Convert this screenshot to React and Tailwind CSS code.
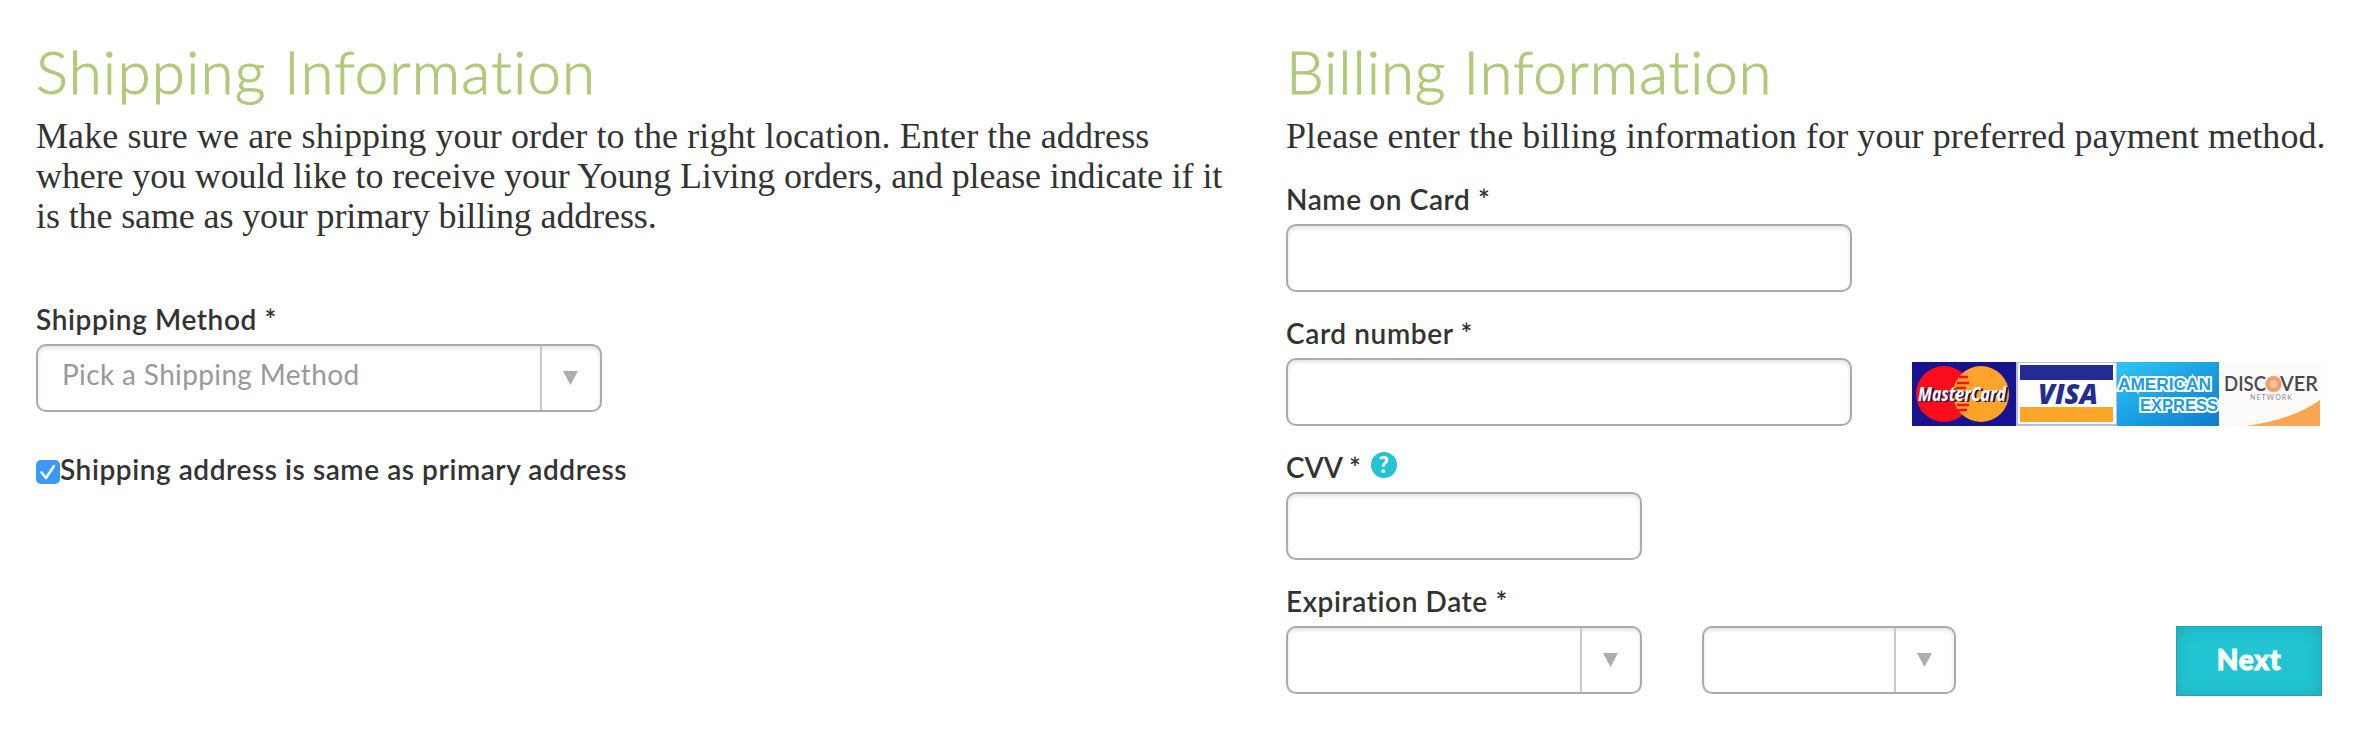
import React, { useState } from "react";
import clsx from "clsx";

const Heading = ({ children, className }) => (
  <h2
    className={clsx(
      "font-['Lato'] text-[60px] leading-[72px] font-light text-[#b1c978] whitespace-nowrap [-webkit-text-stroke:0.9px_#b1c978]",
      className
    )}
  >
    {children}
  </h2>
);

const Label = ({ children, className }) => (
  <label
    className={clsx(
      "flex h-[34px] items-center mb-2 font-['Lato'] text-[28px] leading-[34px] font-semibold tracking-[0.6px] text-[#333] whitespace-nowrap",
      className
    )}
  >
    {children}
  </label>
);

const TextInput = ({ className }) => (
  <input
    type="text"
    className={clsx(
      "block h-[68px] rounded-[10px] border-2 border-[#ababab] bg-white px-6 shadow-[inset_0_2px_4px_rgba(0,0,0,0.12)]",
      className
    )}
  />
);

const Select = ({ placeholder, className }) => (
  <div
    className={clsx(
      "flex h-[68px] rounded-[10px] border-2 border-[#ababab] bg-white shadow-[inset_0_2px_4px_rgba(0,0,0,0.12)]",
      className
    )}
  >
    <div className="flex-1 pl-6 pt-[11px] font-['Lato'] text-[28px] leading-[34px] tracking-[0.36px] text-[#999] whitespace-nowrap">
      {placeholder}
    </div>
    <div className="flex w-[60px] justify-center border-l-2 border-[#c8c8c8] pt-[25px] pr-[2px]">
      <svg width="15" height="14" viewBox="0 0 15 14">
        <path d="M0 0h15L7.5 14z" fill="#adadad" />
      </svg>
    </div>
  </div>
);

const CardLogos = () => (
  <svg width="409" height="64" viewBox="0 0 409 64">
    <defs>
      <linearGradient id="amex" x1="0" y1="0" x2="1" y2="1">
        <stop offset="0" stopColor="#2cc8f6" />
        <stop offset="0.5" stopColor="#1ba0e2" />
        <stop offset="1" stopColor="#0f7ccc" />
      </linearGradient>
    </defs>

    {/* MasterCard */}
    <rect width="104" height="64" fill="#171390" />
    <circle cx="32" cy="32" r="28" fill="#fb0d1b" />
    <circle cx="69" cy="32" r="28" fill="#fca329" />
    <path
      d="M47 15h9M45 21h12M44 26h10M44 38h10M45 43h12M46 48h9"
      stroke="#fb0d1b"
      strokeWidth="2.5"
    />
    <g fontFamily="Open Sans, sans-serif" fontWeight="700" fontStyle="italic" fontSize="19">
      <text x="8" y="40" textLength="88" lengthAdjust="spacingAndGlyphs" fill="#2a1450">MasterCard</text>
      <text x="6" y="38.500" textLength="88" lengthAdjust="spacingAndGlyphs" fill="#fff">MasterCard</text>
    </g>

    {/* Visa */}
    <rect x="104" width="101" height="64" fill="#b9bce0" />
    <rect x="106" y="1" width="98" height="61" fill="#fff" />
    <rect x="108" y="3" width="93" height="15" fill="#232c93" />
    <rect x="108" y="45" width="93" height="15" fill="#fca629" />
    <text
      x="126"
      y="42"
      textLength="60"
      lengthAdjust="spacingAndGlyphs"
      fontFamily="Open Sans, sans-serif"
      fontWeight="800"
      fontStyle="italic"
      fontSize="29"
      fill="#232c93"
    >
      VISA
    </text>

    {/* American Express */}
    <rect x="205" width="102" height="64" fill="url(#amex)" />
    <g
      fontFamily="Liberation Sans, sans-serif"
      fontWeight="700"
      fontSize="17"
      fill="#1e9ce2"
      stroke="#fff"
      strokeWidth="4"
      paintOrder="stroke"
    >
      <text x="206" y="28" textLength="93" lengthAdjust="spacingAndGlyphs">AMERICAN</text>
      <text x="228" y="49" textLength="78" lengthAdjust="spacingAndGlyphs">EXPRESS</text>
    </g>

    {/* Discover */}
    <rect x="307" width="102" height="64" fill="#fdfbfa" />
    <path d="M334 64Q380 58 408 38V64z" fill="#fca552" />
    <g fontFamily="Lato, sans-serif" fontSize="21" fontWeight="600" fill="#4a4a4e">
      <text x="312" y="29" textLength="42" lengthAdjust="spacingAndGlyphs">DISC</text>
      <text x="368" y="29" textLength="38" lengthAdjust="spacingAndGlyphs">VER</text>
    </g>
    <circle cx="361.500" cy="22" r="8" fill="#f79a6a" />
    <circle cx="361.500" cy="22" r="4" fill="#fcc4a0" />
    <text x="338" y="38" textLength="42" fontFamily="Lato, sans-serif" fontSize="7" fill="#8a8a8a">NETWORK</text>
  </svg>
);

const App = () => {
  const [sameAddress, setSameAddress] = useState(true);

  return (
    <div className="flex h-[730px] w-[2362px] bg-white pl-9 pt-[35px]">
      <section className="w-[1250px]">
        <Heading className="tracking-[1.2px]">Shipping Information</Heading>
        <p className="mt-[9px] font-['Liberation_Serif'] text-[36px] leading-10 text-[#333] whitespace-nowrap">
          <span className="block tracking-[0.1px]">Make sure we are shipping your order to the right location. Enter the address</span>
          <span className="block tracking-[-0.115px]">where you would like to receive your Young Living orders, and please indicate if it</span>
          <span className="block tracking-[-0.12px]">is the same as your primary billing address.</span>
        </p>

        <Label className="mt-[66px]">Shipping Method *</Label>
        <Select placeholder="Pick a Shipping Method" className="w-[566px]" />

        <div
          className="mt-10 flex items-center font-['Lato'] text-[28px] leading-[34px] font-semibold tracking-[0.57px] text-[#333] whitespace-nowrap"
          onClick={() => setSameAddress(!sameAddress)}
        >
          <span className="mt-1.5 flex h-6 w-6 items-center justify-center rounded-[5px] bg-[#3b99fc]">
            {sameAddress && (
              <svg width="24" height="24" viewBox="0 0 24 24" fill="none">
                <path d="M5.500 12.500L10 18L18 6" stroke="#fff" strokeWidth="2.600" strokeLinecap="round" strokeLinejoin="round" />
              </svg>
            )}
          </span>
          <span>Shipping address is same as primary address</span>
        </div>
      </section>

      <section className="w-[1036px]">
        <Heading className="tracking-[0.9px]">Billing Information</Heading>
        <p className="mt-[9px] font-['Liberation_Serif'] text-[36px] leading-10 tracking-[0.085px] text-[#333] whitespace-nowrap">
          Please enter the billing information for your preferred payment method.
        </p>

        <Label className="mt-[26px]">Name on Card *</Label>
        <TextInput className="w-[566px]" />

        <Label className="mt-6">Card number *</Label>
        <div className="flex items-end gap-[60px]">
          <TextInput className="w-[566px]" />
          <CardLogos />
        </div>

        <Label className="mt-6">
          <span className="w-[75px] tracking-[0px]">CVV *</span>
          <span className="mb-1 ml-2.5 flex h-[26px] w-[26px] items-center justify-center rounded-full bg-[#22c4d2] text-[22px] leading-none font-black text-white">
            ?
          </span>
        </Label>
        <TextInput className="w-[356px]" />

        <Label className="mt-6">Expiration Date *</Label>
        <div className="flex">
          <Select className="w-[356px]" />
          <Select className="ml-[60px] w-[254px]" />
          <button className="ml-[220px] h-[70px] w-[146px] border border-[#1fa5b1] bg-[#22c4d2] pb-1 font-['Lato'] text-[28px] leading-[34px] font-black tracking-[0.8px] text-white shadow-[inset_0_0_16px_rgba(0,0,0,0.13)] [-webkit-text-stroke:1px_white]">
            Next
          </button>
        </div>
      </section>
    </div>
  );
};

export default App;
